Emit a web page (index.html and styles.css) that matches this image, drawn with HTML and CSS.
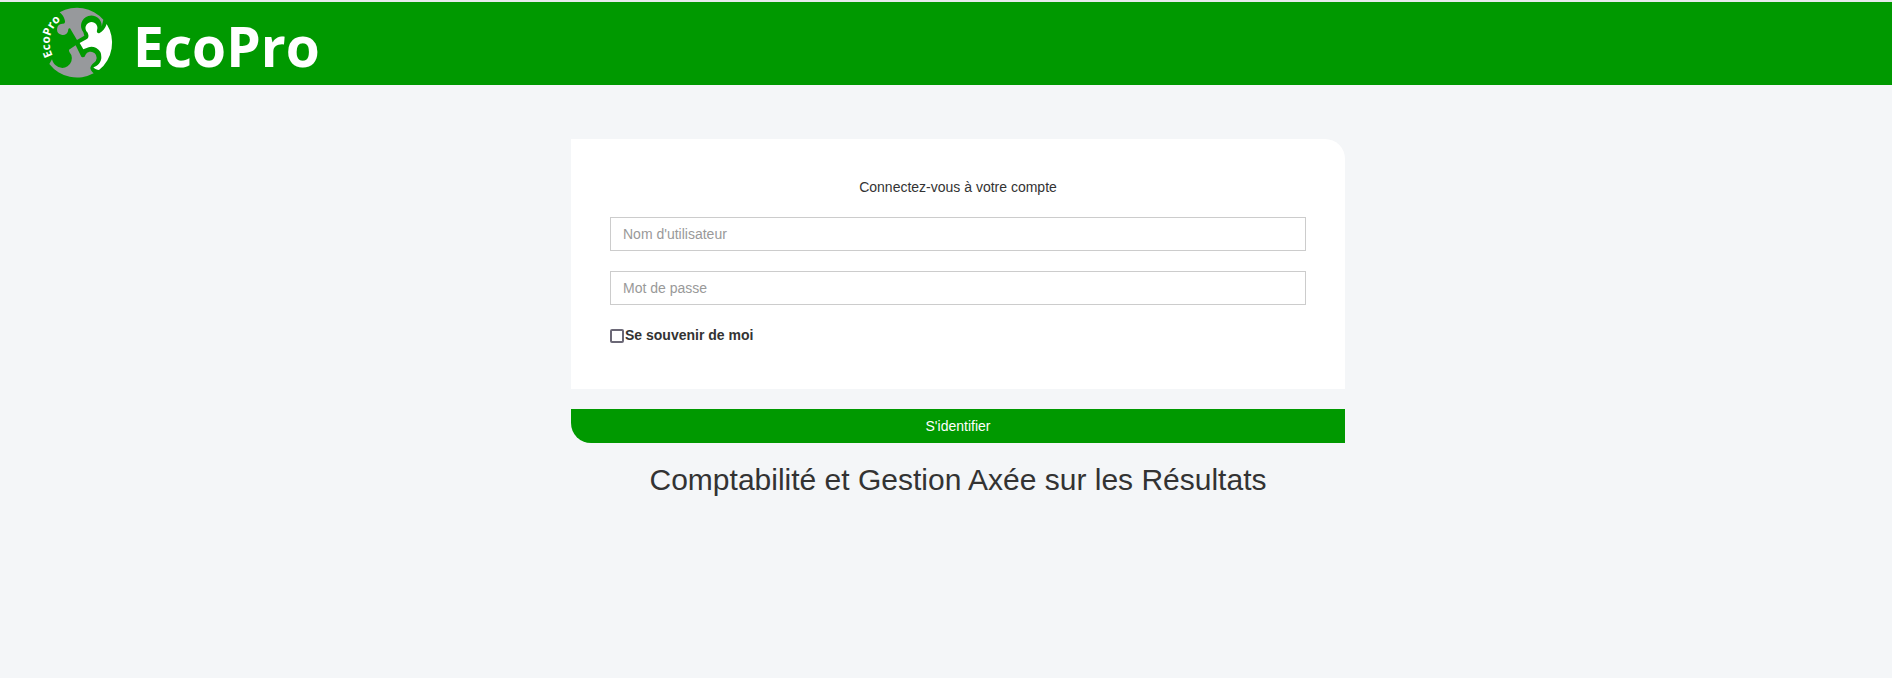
FILE: index.html
```html
<!DOCTYPE html>
<html lang="fr">
<head>
<meta charset="utf-8">
<title>EcoPro</title>
<link rel="stylesheet" href="styles.css">
</head>
<body>
<header class="topbar">
  <a class="brand" href="#" aria-label="EcoPro">
    <svg class="brand-mark" viewBox="0 0 216 216" aria-hidden="true">
      <defs><path id="arc" d="M33 149 A82 82 0 0 1 85 30"/></defs>
      <g fill="#97999c">
        <path d="M53 19 A105 105 0 0 1 184 41 L179 62 A31 31 0 1 0 124 79 L127 89 L105 102 L84 67 C79 66 79 70 78 76 A17 17 0 1 1 61 53 C67 55 71 50 68 41 C66 33 61 26 53 19 Z"/>
        <path d="M22 174 A105 105 0 0 0 155 202 C149 197 146 192 145 186 C146 180 151 173 156 170 A18 18 0 1 0 130 147 C129 153 124 156 118 152 L101 118 L81 131 C80 137 84 140 88 147 A29 29 0 0 1 41 178 C35 173 32 167 30 160 Z"/>
      </g>
      <path fill="#fff" d="M113 111 L136 98 C142 92 139 86 137 80 A18 18 0 1 1 165 73 C163 79 167 83 173 81 C182 76 190 67 194 54 A105 105 0 0 1 171 192 C165 192 159 190 154 184 C166 181 179 168 178 153 A30 30 0 0 0 132 127 L124 130 Z"/>
      <text class="mark-text"><textPath href="#arc">EcoPro</textPath></text>
    </svg>
    <span class="brand-name">EcoPro</span>
  </a>
</header>
<main class="page">
  <form class="login">
    <div class="card">
      <p class="intro">Connectez-vous à votre compte</p>
      <input class="field" type="text" placeholder="Nom d'utilisateur" aria-label="Nom d'utilisateur">
      <input class="field" type="password" placeholder="Mot de passe" aria-label="Mot de passe">
      <label class="remember"><input class="tick" type="checkbox">Se souvenir de moi</label>
    </div>
    <button class="submit" type="submit">S'identifier</button>
    <h1 class="tagline">Comptabilité et Gestion Axée sur les Résultats</h1>
  </form>
</main>
</body>
</html>
```
FILE: styles.css
```css
* { box-sizing: border-box; }
body {
  margin: 0;
  background: #f4f6f8;
  color: #333;
  font: 14px/20px "Liberation Sans", Arial, sans-serif;
}
.topbar {
  display: flex;
  padding: 4px 42px 0;
  border-top: 2px solid #e7eaec;
  background: #090;
}
.brand {
  display: flex;
  align-items: flex-start;
  gap: 19px;
  color: #fff;
  text-decoration: none;
}
.brand-mark {
  width: 72px;
  height: 72px;
  overflow: visible;
}
.mark-text {
  fill: #fff;
  font: bold 35px "Open Sans", sans-serif;
}
.brand-name { font: bold 55px/79px "Open Sans", sans-serif; }
.page {
  display: grid;
  grid-template-columns: 571fr 774fr 547fr;
  padding: 54px 0 40px;
}
.login {
  grid-column: 2;
  display: flex;
  flex-direction: column;
}
.card {
  display: flex;
  flex-direction: column;
  gap: 20px;
  padding: 38px 39px 44px;
  border-radius: 0 20px 0 0;
  background: #fff;
}
.intro { margin: 0; text-align: center; }
.field {
  width: 100%;
  height: 34px;
  padding: 6px 12px;
  border: 1px solid #ccc;
  border-radius: 0;
  background: #fff;
  color: #555;
  font: inherit;
}
.field::placeholder { color: #999; }
.remember {
  display: flex;
  align-items: center;
  gap: 1px;
  font-weight: bold;
}
.tick {
  appearance: none;
  width: 14px;
  height: 14px;
  margin: 2px 0 0;
  border: 2px solid #6b6876;
  border-radius: 2px;
  background: #fff;
}
.tick:checked { background: #090; }
.submit {
  height: 34px;
  margin-top: 20px;
  padding: 6px 12px;
  border: 0;
  border-radius: 0 0 0 20px;
  background: #090;
  color: #fff;
  font: inherit;
}
.tagline {
  margin: 20px 0 10px;
  font-size: 30px;
  font-weight: normal;
  line-height: 33px;
  text-align: center;
}
```
